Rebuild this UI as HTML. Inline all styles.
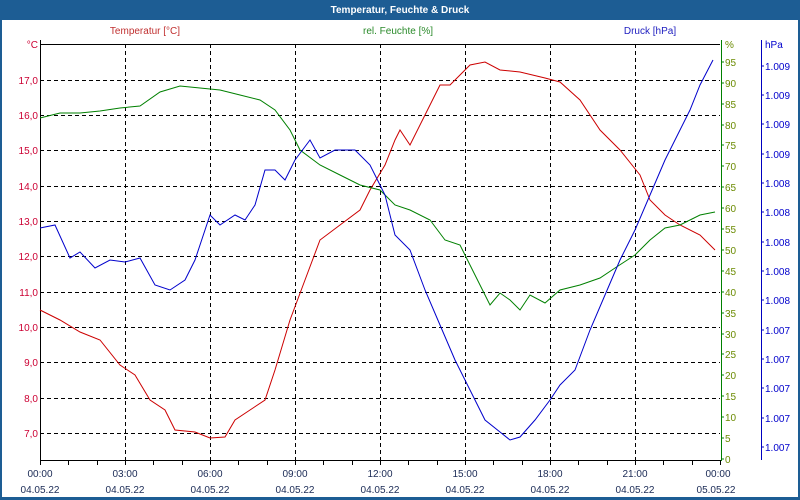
<!DOCTYPE html>
<html><head><meta charset="utf-8"><style>
body{margin:0;width:800px;height:500px;overflow:hidden;background:#fff}
svg{display:block}
text{font-family:"Liberation Sans",sans-serif;font-size:10px}
</style></head><body>
<svg width="800" height="500" viewBox="0 0 800 500">
<rect x="0" y="0" width="800" height="500" fill="#1d5d94"/>
<rect x="2" y="20" width="796" height="477" fill="#fff"/>
<text x="400" y="13" fill="#fff" text-anchor="middle" style="font-weight:bold;font-size:10px">Temperatur, Feuchte &amp; Druck</text>
<text x="145" y="34" fill="#c03030" text-anchor="middle">Temperatur [°C]</text>
<text x="398" y="34" fill="#2a8a2a" text-anchor="middle">rel. Feuchte [%]</text>
<text x="650" y="34" fill="#2020c0" text-anchor="middle">Druck [hPa]</text>
<g stroke="#000" stroke-dasharray="4,3" stroke-width="1">
<line x1="40" y1="80.5" x2="720" y2="80.5"/><line x1="40" y1="115.5" x2="720" y2="115.5"/><line x1="40" y1="150.5" x2="720" y2="150.5"/><line x1="40" y1="186.5" x2="720" y2="186.5"/><line x1="40" y1="221.5" x2="720" y2="221.5"/><line x1="40" y1="256.5" x2="720" y2="256.5"/><line x1="40" y1="292.5" x2="720" y2="292.5"/><line x1="40" y1="327.5" x2="720" y2="327.5"/><line x1="40" y1="362.5" x2="720" y2="362.5"/><line x1="40" y1="398.5" x2="720" y2="398.5"/><line x1="40" y1="433.5" x2="720" y2="433.5"/>
<line x1="125.5" y1="44" x2="125.5" y2="460"/><line x1="210.5" y1="44" x2="210.5" y2="460"/><line x1="295.5" y1="44" x2="295.5" y2="460"/><line x1="380.5" y1="44" x2="380.5" y2="460"/><line x1="465.5" y1="44" x2="465.5" y2="460"/><line x1="550.5" y1="44" x2="550.5" y2="460"/><line x1="635.5" y1="44" x2="635.5" y2="460"/>
</g>
<g stroke="#000" stroke-width="1">
<line x1="40.5" y1="40" x2="40.5" y2="465"/><line x1="40" y1="460.5" x2="721" y2="460.5"/>
<line x1="40" y1="44.5" x2="720" y2="44.5"/>
<line x1="68.5" y1="460" x2="68.5" y2="465"/><line x1="97.5" y1="460" x2="97.5" y2="465"/><line x1="153.5" y1="460" x2="153.5" y2="465"/><line x1="182.5" y1="460" x2="182.5" y2="465"/><line x1="238.5" y1="460" x2="238.5" y2="465"/><line x1="267.5" y1="460" x2="267.5" y2="465"/><line x1="323.5" y1="460" x2="323.5" y2="465"/><line x1="352.5" y1="460" x2="352.5" y2="465"/><line x1="408.5" y1="460" x2="408.5" y2="465"/><line x1="437.5" y1="460" x2="437.5" y2="465"/><line x1="493.5" y1="460" x2="493.5" y2="465"/><line x1="522.5" y1="460" x2="522.5" y2="465"/><line x1="578.5" y1="460" x2="578.5" y2="465"/><line x1="607.5" y1="460" x2="607.5" y2="465"/><line x1="663.5" y1="460" x2="663.5" y2="465"/><line x1="692.5" y1="460" x2="692.5" y2="465"/>
<line x1="125.5" y1="460" x2="125.5" y2="465"/><line x1="210.5" y1="460" x2="210.5" y2="465"/><line x1="295.5" y1="460" x2="295.5" y2="465"/><line x1="380.5" y1="460" x2="380.5" y2="465"/><line x1="465.5" y1="460" x2="465.5" y2="465"/><line x1="550.5" y1="460" x2="550.5" y2="465"/><line x1="635.5" y1="460" x2="635.5" y2="465"/><line x1="720.5" y1="460" x2="720.5" y2="465"/>
</g>
<line x1="721.5" y1="40" x2="721.5" y2="461" stroke="#008000"/>
<line x1="761.5" y1="40" x2="761.5" y2="460" stroke="#0000c0"/>
<g fill="#cc0033" text-anchor="end">
<text x="38" y="48">°C</text><text x="38" y="84">17,0</text><text x="38" y="119">16,0</text><text x="38" y="154">15,0</text><text x="38" y="190">14,0</text><text x="38" y="225">13,0</text><text x="38" y="260">12,0</text><text x="38" y="296">11,0</text><text x="38" y="331">10,0</text><text x="38" y="366">9,0</text><text x="38" y="402">8,0</text><text x="38" y="437">7,0</text>
</g>
<g fill="#6a8a00">
<text x="725" y="48">%</text><text x="725" y="66">95</text><text x="725" y="87">90</text><text x="725" y="108">85</text><text x="725" y="129">80</text><text x="725" y="149">75</text><text x="725" y="170">70</text><text x="725" y="191">65</text><text x="725" y="212">60</text><text x="725" y="233">55</text><text x="725" y="254">50</text><text x="725" y="275">45</text><text x="725" y="296">40</text><text x="725" y="317">35</text><text x="725" y="338">30</text><text x="725" y="358">25</text><text x="725" y="379">20</text><text x="725" y="400">15</text><text x="725" y="421">10</text><text x="725" y="442">5</text><text x="725" y="463">0</text>
</g>
<g stroke="#008000"><line x1="721" y1="62" x2="724" y2="62"/><line x1="721" y1="83" x2="724" y2="83"/><line x1="721" y1="104" x2="724" y2="104"/><line x1="721" y1="125" x2="724" y2="125"/><line x1="721" y1="145" x2="724" y2="145"/><line x1="721" y1="166" x2="724" y2="166"/><line x1="721" y1="187" x2="724" y2="187"/><line x1="721" y1="208" x2="724" y2="208"/><line x1="721" y1="229" x2="724" y2="229"/><line x1="721" y1="250" x2="724" y2="250"/><line x1="721" y1="271" x2="724" y2="271"/><line x1="721" y1="292" x2="724" y2="292"/><line x1="721" y1="313" x2="724" y2="313"/><line x1="721" y1="334" x2="724" y2="334"/><line x1="721" y1="354" x2="724" y2="354"/><line x1="721" y1="375" x2="724" y2="375"/><line x1="721" y1="396" x2="724" y2="396"/><line x1="721" y1="417" x2="724" y2="417"/><line x1="721" y1="438" x2="724" y2="438"/><line x1="721" y1="459" x2="724" y2="459"/></g>
<g fill="#0000cc">
<text x="765" y="48">hPa</text>
<text x="765" y="70">1.009</text><text x="765" y="99">1.009</text><text x="765" y="128">1.009</text><text x="765" y="158">1.009</text><text x="765" y="187">1.008</text><text x="765" y="216">1.008</text><text x="765" y="246">1.008</text><text x="765" y="275">1.008</text><text x="765" y="304">1.008</text><text x="765" y="334">1.007</text><text x="765" y="363">1.007</text><text x="765" y="392">1.007</text><text x="765" y="422">1.007</text><text x="765" y="451">1.007</text>
</g>
<g stroke="#0000c0"><line x1="761" y1="66" x2="764" y2="66"/><line x1="761" y1="95" x2="764" y2="95"/><line x1="761" y1="124" x2="764" y2="124"/><line x1="761" y1="154" x2="764" y2="154"/><line x1="761" y1="183" x2="764" y2="183"/><line x1="761" y1="212" x2="764" y2="212"/><line x1="761" y1="242" x2="764" y2="242"/><line x1="761" y1="271" x2="764" y2="271"/><line x1="761" y1="300" x2="764" y2="300"/><line x1="761" y1="330" x2="764" y2="330"/><line x1="761" y1="359" x2="764" y2="359"/><line x1="761" y1="388" x2="764" y2="388"/><line x1="761" y1="418" x2="764" y2="418"/><line x1="761" y1="447" x2="764" y2="447"/></g>
<g fill="#1a2a55" text-anchor="middle">
<text x="40" y="477">00:00</text><text x="125" y="477">03:00</text><text x="210" y="477">06:00</text><text x="295" y="477">09:00</text><text x="380" y="477">12:00</text><text x="465" y="477">15:00</text><text x="550" y="477">18:00</text><text x="635" y="477">21:00</text><text x="718" y="477">00:00</text>
<text x="40" y="493">04.05.22</text><text x="125" y="493">04.05.22</text><text x="210" y="493">04.05.22</text><text x="295" y="493">04.05.22</text><text x="380" y="493">04.05.22</text><text x="465" y="493">04.05.22</text><text x="550" y="493">04.05.22</text><text x="635" y="493">04.05.22</text><text x="716" y="493">05.05.22</text>
</g>
<g fill="none" stroke-width="1">
<polyline stroke="#cc0000" points="40,310 60,320 80,332 100,340 120,365 135,375 150,400 165,410 175,430 195,432 210,438 225,437 235,420 250,410 265,400 275,370 290,320 305,280 320,240 340,225 360,210 370,190 385,165 395,140 400,130 410,145 425,115 440,85 450,85 460,75 470,65 485,62 500,70 520,72 545,78 560,82 580,100 600,130 620,150 640,175 650,200 665,215 680,225 700,235 715,250"/>
<polyline stroke="#008000" points="40,118 60,113 80,113 100,111 120,108 140,106 160,92 180,86 200,88 220,90 240,95 260,100 275,110 290,130 300,150 320,165 340,175 360,185 380,190 395,205 410,210 430,220 445,240 460,245 475,275 490,305 500,293 510,300 520,310 530,295 545,303 560,290 580,285 600,278 615,268 635,255 650,240 665,228 680,225 700,215 715,212"/>
<polyline stroke="#0000cc" points="40,228 55,225 70,258 80,252 95,268 110,260 125,262 140,258 155,285 170,290 185,280 195,260 210,215 220,225 235,215 245,220 255,205 265,170 275,170 285,180 295,160 310,140 320,158 335,150 355,150 370,165 385,195 395,235 410,250 425,290 440,325 455,360 470,390 485,420 500,432 510,440 520,437 535,420 550,400 560,385 575,370 590,330 605,295 620,260 635,230 650,195 665,160 680,130 690,110 700,85 713,60"/>
</g>
</svg>
</body></html>
